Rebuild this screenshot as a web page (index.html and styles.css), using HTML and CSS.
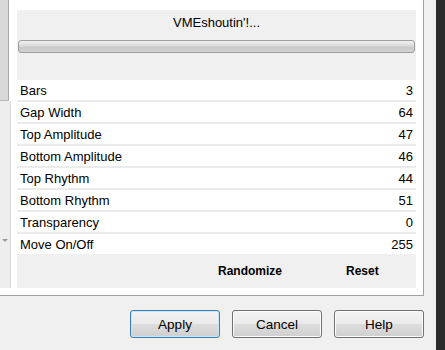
FILE: index.html
```html
<!DOCTYPE html>
<html lang="en">
  <head>
    <meta charset="utf-8" />
    <title>VMEshoutin'!</title>
    <link rel="stylesheet" href="styles.css">
  </head>
  <body>
    <div class="window">
      <div class="main">
        <div class="top">
          <div class="scroll">
            <div class="thumb"></div>
            <div class="track">
              <span class="arrow"></span>
            </div>
          </div>

          <section class="panel">
            <div class="head">
              <div class="title">VMEshoutin'!...</div>
              <div class="slider"></div>
            </div>

            <div class="rows">
              <div class="row"><span>Bars</span><span>3</span></div>
              <div class="row"><span>Gap Width</span><span>64</span></div>
              <div class="row"><span>Top Amplitude</span><span>47</span></div>
              <div class="row"><span>Bottom Amplitude</span><span>46</span></div>
              <div class="row"><span>Top Rhythm</span><span>44</span></div>
              <div class="row"><span>Bottom Rhythm</span><span>51</span></div>
              <div class="row"><span>Transparency</span><span>0</span></div>
              <div class="row"><span>Move On/Off</span><span>255</span></div>
            </div>

            <div class="actions">
              <span>Randomize</span>
              <span>Reset</span>
            </div>
          </section>
        </div>

        <div class="buttons">
          <button class="btn default">Apply</button>
          <button class="btn">Cancel</button>
          <button class="btn">Help</button>
        </div>
      </div>
      <div class="edge"></div>
    </div>
  </body>
</html>
```

FILE: styles.css
```css
body {
  margin: 0;
  font-family: "Liberation Sans", Arial, sans-serif;
  font-size: 13px;
  color: #000;
}

.window {
  display: flex;
  width: 445px;
  height: 350px;
  overflow: hidden;
  background: #f0f0f0;
}

.main {
  width: 436px;
  display: flex;
  flex-direction: column;
}

.top {
  display: flex;
  width: 423px;
  height: 295px;
  background: #fff;
  border-right: 1px solid #a0a0a0;
  border-bottom: 1px solid #a0a0a0;
}

.scroll {
  width: 11px;
  height: 288px;
  margin-right: 6px;
  display: flex;
  flex-direction: column;
}

.thumb {
  width: 8px;
  height: 100px;
  background: #d9d9d9;
  border-right: 1px solid #a8a8a8;
  border-bottom: 1px solid #b8b8b8;
}

.track {
  flex: 1;
  background: #eeeeee;
  border-right: 1px solid #d8d8d8;
  display: flex;
  flex-direction: column;
  justify-content: flex-end;
  padding-bottom: 46px;
}

.arrow {
  width: 0;
  height: 0;
  margin-left: 2px;
  border-left: 3px solid transparent;
  border-right: 3px solid transparent;
  border-top: 3px solid #9a9a9a;
}

.panel {
  width: 399px;
  height: 278px;
  margin-top: 10px;
  background: #f0f0f0;
  display: flex;
  flex-direction: column;
}

.head {
  height: 70px;
}

.title {
  height: 26px;
  line-height: 26px;
  text-align: center;
}

.slider {
  height: 11px;
  margin: 4px 1px 0;
  border: 1px solid #9e9e9e;
  border-radius: 3px;
  background: linear-gradient(#f2f2f2 0%, #dcdcdc 40%, #cacaca 60%, #d2d2d2 100%);
}

.rows {
  display: flex;
  flex-direction: column;
  gap: 2px;
  background: #ebebeb;
}

.row {
  height: 20px;
  display: flex;
  align-items: center;
  justify-content: space-between;
  padding: 0 3px;
  background: #fff;
}

.actions {
  flex: 1;
  display: flex;
  align-items: center;
  gap: 64px;
  padding-left: 201px;
  font-size: 12px;
  font-weight: bold;
}

.buttons {
  display: flex;
  justify-content: flex-end;
  gap: 12px;
  padding: 14px 12px 0 0;
}

.btn {
  width: 90px;
  height: 28px;
  font-family: "Liberation Sans", Arial, sans-serif;
  font-size: 13.5px;
  color: #000;
  border: 1px solid #707070;
  border-radius: 3px;
  background: linear-gradient(#f2f2f2 0%, #ebebeb 50%, #dddddd 51%, #cfcfcf 100%);
  box-shadow: inset 0 0 0 1px #fcfcfc;
}

.btn.default {
  border-color: #3c7fb1;
  box-shadow: inset 0 0 0 1px #c8e6f8;
}

.edge {
  flex: 1;
  background: #2b2b2b;
}
```
